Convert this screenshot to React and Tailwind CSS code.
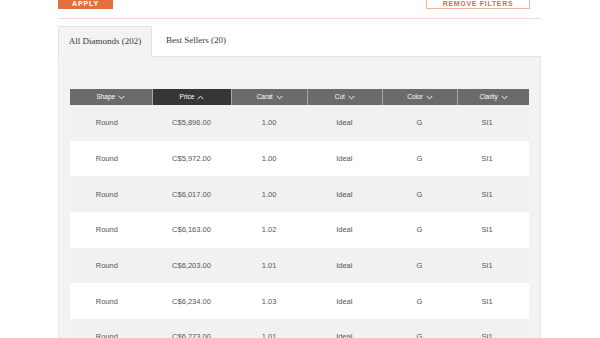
import React from 'react'

const columns = [
  { label: 'Shape', w: 'w-[82px]', dir: 'down', pad: 'pr-[8px]' },
  { label: 'Price', w: 'w-[80px]', dir: 'up', active: true, pad: '' },
  { label: 'Carat', w: 'w-[76px]', dir: 'down', pad: '' },
  { label: 'Cut', w: 'w-[75px]', dir: 'down', pad: '' },
  { label: 'Color', w: 'w-[76px]', dir: 'down', pad: '' },
  { label: 'Clarity', w: 'w-[72px]', dir: 'down', pad: 'pr-[12px]' },
]

const rows = [
  ['Round', 'C$5,896.00', '1.00', 'Ideal', 'G', 'SI1'],
  ['Round', 'C$5,972.00', '1.00', 'Ideal', 'G', 'SI1'],
  ['Round', 'C$6,017.00', '1.00', 'Ideal', 'G', 'SI1'],
  ['Round', 'C$6,163.00', '1.02', 'Ideal', 'G', 'SI1'],
  ['Round', 'C$6,203.00', '1.01', 'Ideal', 'G', 'SI1'],
  ['Round', 'C$6,234.00', '1.03', 'Ideal', 'G', 'SI1'],
  ['Round', 'C$6,273.00', '1.01', 'Ideal', 'G', 'SI1'],
]

const Chevron = ({ dir }) => (
  <svg width="7" height="5" viewBox="0 0 10 6" fill="none" stroke="currentColor" strokeWidth="1.4">
    {dir === 'up' ? <path d="M1 5.2 5 1.2 9 5.2" /> : <path d="M1 0.8 5 4.8 9 0.8" />}
  </svg>
)

const App = () => {
  return (
    <div className="w-[600px] h-[338px] overflow-hidden bg-white font-['Liberation_Sans',Arial,sans-serif]">
      <div className="ml-[58px] w-[483px]">
        {/* filter buttons */}
        <div className="flex justify-between h-[9px]">
          <button className="w-[55px] h-[9px] bg-[#e2703f] text-white text-[7px] font-bold tracking-[0.12em] leading-none flex items-end justify-center pb-[2px]">
            APPLY
          </button>
          <button className="mr-[11px] w-[104px] h-[9px] border-x border-b border-[#eab49b] text-[#d0714c] text-[7px] font-bold tracking-[0.1em] leading-none flex items-end justify-center pb-[1px]">
            REMOVE FILTERS
          </button>
        </div>

        <div className="mt-[9px] border-t border-[#f6d9c9]" />

        {/* tabs */}
        <div className="mt-[7px] flex items-end font-['Liberation_Serif',serif] text-[9px] text-[#3a3a3a]">
          <div className="w-[94px] h-[31px] bg-[#f3f3f4] border-x border-t border-[#e2e2e3] flex items-center justify-center">
            All Diamonds (202)
          </div>
          <div className="flex-1 h-[31px] border-b border-[#e2e2e3] flex items-center pl-[14px]">
            Best Sellers (20)
          </div>
        </div>

        {/* panel */}
        <div className="bg-[#f3f3f4] border-x border-[#e6e6e7] px-[11px] pt-[32px] h-[300px]">
          <div className="flex h-[16px]">
            {columns.map((c, i) => (
              <div
                key={c.label}
                className={`${c.w} flex items-center justify-center gap-[3px] text-white text-[6.5px] ${c.active ? 'bg-[#363636]' : 'bg-[#6b6b6b]'} ${i > 0 ? 'border-l border-[#a8a8a8]' : ''}`}
              >
                <span>{c.label}</span>
                <Chevron dir={c.dir} />
              </div>
            ))}
          </div>
          {rows.map((r, ri) => (
            <div key={ri} className={`flex h-[35.7px] items-center ${ri % 2 ? 'bg-white' : 'bg-[#f1f1f2]'}`}>
              {r.map((v, ci) => (
                <div key={ci} className={`${columns[ci].w} ${columns[ci].pad} text-center text-[7.5px] text-[#555]`}>
                  {v}
                </div>
              ))}
            </div>
          ))}
        </div>
      </div>
    </div>
  )
}

export default App
